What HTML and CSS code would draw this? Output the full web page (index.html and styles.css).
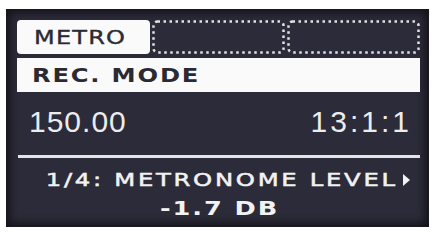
FILE: index.html
```html
<!DOCTYPE html>
<html lang="en">
<head>
    <meta charset="UTF-8">
    <meta name="viewport" content="width=device-width, initial-scale=1.0">
    <title>Metro screen</title>
    <link rel="stylesheet" href="styles.css">
</head>
<body>
    <div class="screen">
        <div class="tabs">
            <div class="tab active"><span class="wide">METRO</span></div>
            <div class="tab empty">
                <svg width="133" height="34" viewBox="0 0 133 34"><rect x="1.5" y="1.5" width="130" height="31" rx="4" /></svg>
            </div>
            <div class="tab empty">
                <svg width="133" height="34" viewBox="0 0 133 34"><rect x="1.5" y="1.5" width="130" height="31" rx="4" /></svg>
            </div>
        </div>

        <div class="mode"><span class="wide">REC. MODE</span></div>

        <div class="values">
            <span class="tempo">150.00</span>
            <span class="position">13:1:1</span>
        </div>

        <div class="divider"></div>

        <div class="param">
            <div class="param-name"><span class="wide">1/4: METRONOME LEVEL</span><span class="arrow"></span></div>
            <div class="param-value"><span class="wide">-1.7 DB</span></div>
        </div>
    </div>
</body>
</html>
```

FILE: styles.css
```css
body {
    margin: 0;
    background-color: #fff;
}

.screen {
    width: 423px;
    height: 218px;
    margin: 9px 0 0 6px;
    padding: 11px 9px 0 11px;
    box-sizing: border-box;
    background-color: #2c2b39;
    box-shadow: inset 0 0 8px 4px #141319;
    color: #f2f2f2;
    font-family: "DejaVu Sans", sans-serif;
}

.wide {
    display: inline-block;
    transform-origin: left center;
}

.tabs {
    display: grid;
    grid-template-columns: repeat(3, 133px);
    gap: 2px;
    height: 34px;
}

.tab {
    height: 34px;
    box-sizing: border-box;
}

.tab.active {
    background-color: #fafafa;
    border-radius: 4px;
    color: #2b2a33;
    font-size: 20px;
    line-height: 34px;
    letter-spacing: 1px;
    padding-left: 17px;
    -webkit-text-stroke: 0.4px #2b2a33;
}

.tab.active .wide {
    transform: scaleX(1.2);
}

.tab.empty svg {
    display: block;
}

.tab.empty rect {
    fill: none;
    stroke: #e2e2e2;
    stroke-width: 2.5;
    stroke-dasharray: 2.5 3.5;
}

.mode {
    margin-top: 4px;
    height: 34px;
    background-color: #fafafa;
    color: #2b2a33;
    font-weight: bold;
    font-size: 20px;
    line-height: 35px;
    letter-spacing: 1.5px;
    padding-left: 15px;
}

.mode .wide {
    transform: scaleX(1.21);
}

.values {
    display: flex;
    justify-content: space-between;
    padding: 13px 8px 0 12px;
    height: 34px;
    margin-bottom: 16px;
    font-family: "Liberation Sans", Arial, sans-serif;
    font-size: 30px;
    line-height: 34px;
    color: #ececec;
}

.tempo {
    letter-spacing: 1px;
}

.position {
    letter-spacing: 3px;
}

.divider {
    height: 3px;
    margin-left: 1px;
    background-color: #e4e4e4;
}

.param-name {
    display: flex;
    justify-content: flex-end;
    align-items: center;
    margin-top: 12px;
    font-size: 18px;
    line-height: 20px;
    letter-spacing: 2px;
    padding-right: 10px;
    -webkit-text-stroke: 0.5px #f2f2f2;
}

.param-name .wide {
    transform-origin: right center;
    transform: scaleX(1.35);
}

.arrow {
    width: 0;
    height: 0;
    margin-left: 5px;
    border-left: 7px solid #f2f2f2;
    border-top: 6px solid transparent;
    border-bottom: 6px solid transparent;
}

.param-value {
    margin-top: 7px;
    font-weight: bold;
    font-size: 20px;
    line-height: 22px;
    letter-spacing: 1.5px;
    text-align: center;
    padding-left: 2px;
}

.param-value .wide {
    transform-origin: center;
    transform: scaleX(1.28);
}
```
